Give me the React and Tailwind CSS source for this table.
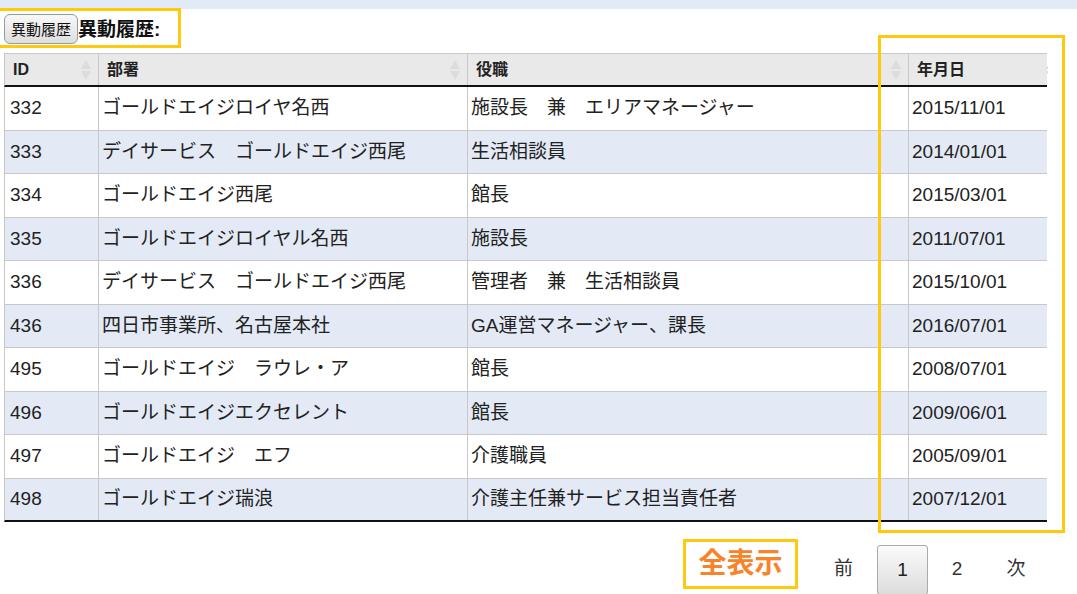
import React from "react";

const rows = [
  ["332", "ゴールドエイジロイヤ名西", "施設長　兼　エリアマネージャー", "2015/11/01"],
  ["333", "デイサービス　ゴールドエイジ西尾", "生活相談員", "2014/01/01"],
  ["334", "ゴールドエイジ西尾", "館長", "2015/03/01"],
  ["335", "ゴールドエイジロイヤル名西", "施設長", "2011/07/01"],
  ["336", "デイサービス　ゴールドエイジ西尾", "管理者　兼　生活相談員", "2015/10/01"],
  ["436", "四日市事業所、名古屋本社", "GA運営マネージャー、課長", "2016/07/01"],
  ["495", "ゴールドエイジ　ラウレ・ア", "館長", "2008/07/01"],
  ["496", "ゴールドエイジエクセレント", "館長", "2009/06/01"],
  ["497", "ゴールドエイジ　エフ", "介護職員", "2005/09/01"],
  ["498", "ゴールドエイジ瑞浪", "介護主任兼サービス担当責任者", "2007/12/01"],
];

function SortArrows({ className }) {
  return (
    <svg width="12" height="22" viewBox="0 0 12 22" className={className}>
      <path d="M6 1 L11 10 L1 10 Z" fill="#dcdcdc" />
      <path d="M1 12 L11 12 L6 21 Z" fill="#dcdcdc" />
    </svg>
  );
}

const headers = ["ID", "部署", "役職", "年月日"];

export default function App() {
  return (
    <div
      className="relative w-[1077px] h-[594px] overflow-hidden bg-white text-[#222]"
      style={{ fontFamily: '"Liberation Sans", "Noto Sans CJK JP", sans-serif' }}
    >
      <div className="h-[9px] w-full bg-[#e3eaf7]" />

      <div className="flex h-[40px] w-[181px] items-end border-[3px] border-l-0 border-[#ffc90e] pb-[1px] -mt-[1px]">
        <button className="ml-[4px] h-[30px] rounded-[6px] border border-[#9a9a9a] bg-gradient-to-b from-[#f8f8f8] to-[#dedede] px-[6px] text-[15px] leading-none text-[#111]">
          異動履歴
        </button>
        <span className="mb-[5px] text-[19px] font-bold leading-none text-[#111]">異動履歴:</span>
      </div>

      <div className="ml-[4px] mt-[5px] w-[1043px]">
        <div className="grid grid-cols-[94px_369px_441px_139px] h-[34px] border-t border-l border-[#c8c8c8] border-b-2 border-b-[#111] bg-[#e9e9e9]">
          {headers.map((h, i) => (
            <div
              key={h}
              className={`relative flex items-center overflow-hidden pl-[8px] text-[16px] font-bold ${i < 3 ? "border-r border-[#c8c8c8]" : ""}`}
            >
              {h}
              <SortArrows
                className={`absolute top-[5px] ${i === 3 ? "right-[-9px]" : "right-[6px]"}`}
              />
            </div>
          ))}
        </div>

        {rows.map((r, idx) => (
          <div
            key={r[0]}
            className={`grid grid-cols-[94px_369px_441px_139px] h-[43.5px] border-l border-[#c8c8c8] ${
              idx === rows.length - 1 ? "border-b-2 border-b-[#111]" : "border-b border-[#c8c8c8]"
            } ${idx % 2 === 1 ? "bg-[#e3eaf6]" : "bg-white"}`}
          >
            {r.map((c, i) => (
              <div
                key={i}
                className={`flex items-center whitespace-nowrap text-[19px] ${i === 0 ? "pl-[5px]" : "pl-[3px]"} ${i < 3 ? "border-r border-[#c8c8c8]" : ""}`}
              >
                {c}
              </div>
            ))}
          </div>
        ))}
      </div>

      <div className="ml-[683px] mt-[17px] flex items-start">
        <div className="flex h-[50px] w-[115px] items-center justify-center border-[3px] border-[#ffc90e] text-[28px] font-bold text-[#f7842a]">
          全表示
        </div>
        <div className="ml-[28px] mt-[6px] flex text-[19px] text-[#333]">
          <div className="flex h-[48px] w-[51px] items-center justify-center pr-[16px]">前</div>
          <div className="flex h-[50px] w-[51px] items-center justify-center rounded-[3px] border border-[#aaa] bg-gradient-to-b from-[#fbfbfb] to-[#dcdcdc] text-[#222]">
            1
          </div>
          <div className="flex h-[48px] w-[58px] items-center justify-center">2</div>
          <div className="flex h-[48px] w-[60px] items-center justify-center">次</div>
        </div>
      </div>

      <div className="absolute left-[878px] top-[35px] h-[498px] w-[187px] border-[3px] border-[#ffc90e]" />
    </div>
  );
}
